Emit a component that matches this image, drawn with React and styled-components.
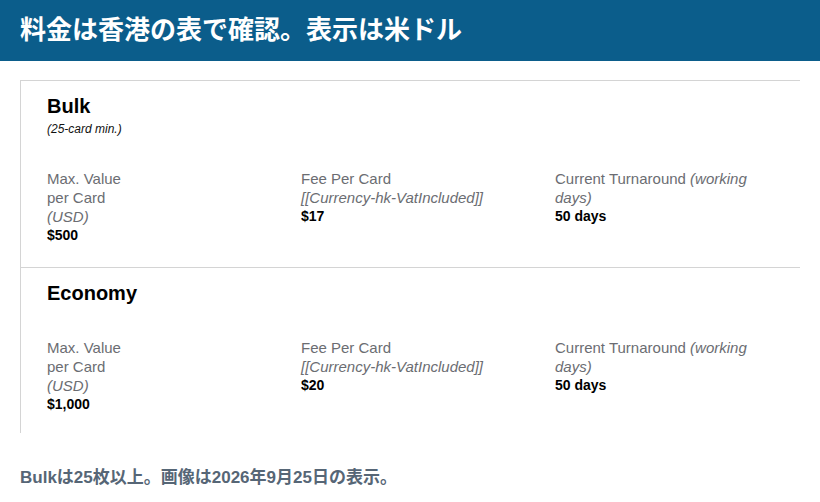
import React from 'react';
import styled, { createGlobalStyle } from 'styled-components';

const GlobalStyle = createGlobalStyle`
  body {
    margin: 0;
    background: #ffffff;
    font-family: "Liberation Sans", Arial, "Noto Sans CJK JP", sans-serif;
  }
`;

const Header = styled.header`
  height: 61px;
  background-color: #0b5d8b;
  display: flex;
  align-items: center;
  padding: 0 20px;

  h1 {
    margin: 0;
    margin-top: -6px;
    font-family: "Noto Sans CJK JP", sans-serif;
    font-size: 26px;
    font-weight: 700;
    color: #ffffff;
  }
`;

const Page = styled.main`
  padding: 19px 20px 0 20px;
`;

const Card = styled.section`
  border-top: 1px solid #d4d4d4;
  border-left: 1px solid #d4d4d4;
`;

const Tier = styled.div`
  padding: ${(props) => (props.last ? '13px 26px 19px 26px' : '13px 26px 22px 26px')};
  border-bottom: ${(props) => (props.last ? 'none' : '1px solid #d4d4d4')};
`;

const TierHead = styled.div`
  margin-bottom: ${(props) => (props.last ? '33px' : '32px')};
`;

const TierName = styled.h2`
  margin: 0;
  font-size: 20px;
  line-height: 24px;
  font-weight: 700;
  color: #000;
`;

const TierNote = styled.p`
  margin: 3px 0 0 0;
  font-size: 12px;
  line-height: 16px;
  font-style: italic;
  color: #111;
`;

const Columns = styled.div`
  display: grid;
  grid-template-columns: 254px 254px 1fr;
`;

const Col = styled.div`
  max-width: ${(props) => props.max};
`;

const Label = styled.div`
  font-size: 15px;
  line-height: 19px;
  color: #6b6d72;

  em {
    font-style: italic;
  }
`;

const Value = styled.div`
  font-size: 14px;
  line-height: 19px;
  font-weight: 700;
  color: #000;
`;

const Footnote = styled.p`
  margin: 33px 0 0 0;
  font-family: "Liberation Sans", Arial, "Noto Sans CJK JP", sans-serif;
  font-size: 17px;
  line-height: 24px;
  font-weight: 600;
  color: #566676;
`;

const tiers = [
  { name: 'Bulk', note: '(25-card min.)', max: '$500', fee: '$17', days: '50 days' },
  { name: 'Economy', note: null, max: '$1,000', fee: '$20', days: '50 days' },
];

function App() {
  return (
    <div>
      <GlobalStyle />
      <Header>
        <h1>料金は香港の表で確認。表示は米ドル</h1>
      </Header>
      <Page>
        <Card>
          {tiers.map((t, i) => {
            const last = i === tiers.length - 1;
            return (
              <Tier key={t.name} last={last}>
                <TierHead last={last}>
                  <TierName>{t.name}</TierName>
                  {t.note && <TierNote>{t.note}</TierNote>}
                </TierHead>
                <Columns>
                  <Col max="90px">
                    <Label>
                      Max. Value per Card <em>(USD)</em>
                    </Label>
                    <Value>{t.max}</Value>
                  </Col>
                  <Col max="230px">
                    <Label>Fee Per Card</Label>
                    <Label>
                      <em>[[Currency-hk-VatIncluded]]</em>
                    </Label>
                    <Value>{t.fee}</Value>
                  </Col>
                  <Col max="210px">
                    <Label>
                      Current Turnaround <em>(working days)</em>
                    </Label>
                    <Value>{t.days}</Value>
                  </Col>
                </Columns>
              </Tier>
            );
          })}
        </Card>
        <Footnote>Bulkは25枚以上。画像は2026年9月25日の表示。</Footnote>
      </Page>
    </div>
  );
}

export default App;
